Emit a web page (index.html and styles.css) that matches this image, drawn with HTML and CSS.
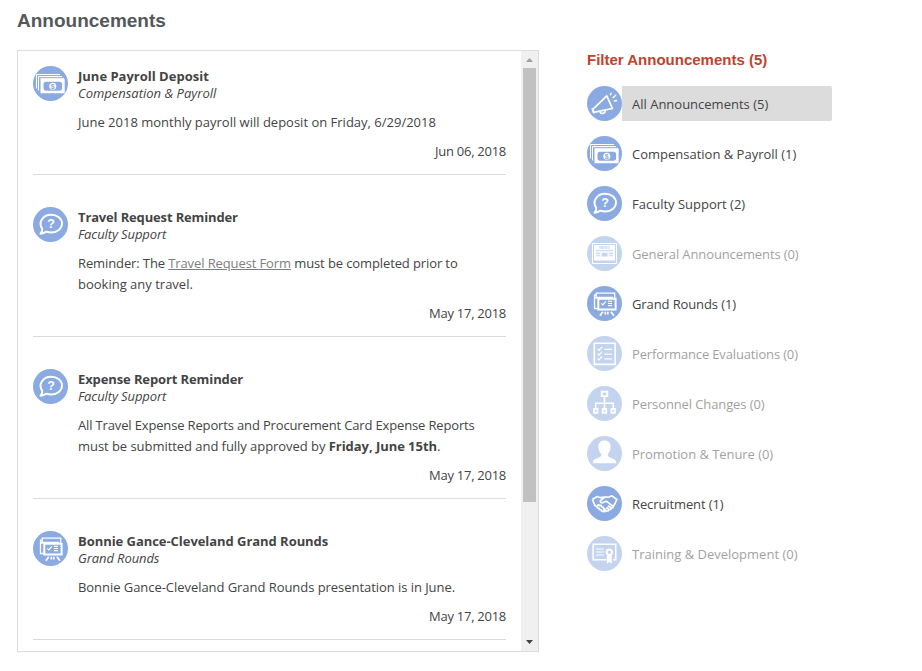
FILE: index.html
```html
<!DOCTYPE html>
<html lang="en">
<head>
<meta charset="utf-8">
<title>Announcements</title>
<link rel="stylesheet" href="styles.css">
</head>
<body>
<svg class="sprite" aria-hidden="true">
  <symbol id="money" viewBox="0 0 35 35">
    <path d="M3.500 22.500V8.500H27M5.500 24.500V10.500H29M31 12.300H7.300" fill="none" stroke="#fff" stroke-width="1"/>
    <path d="M7.500 13h24.200v14.200H7.500z" fill="#fff"/>
    <rect x="10.500" y="15.700" width="18.600" height="9" rx="2.600" fill="#8aaae1"/>
    <circle cx="19.800" cy="20.200" r="3.500" fill="#fff"/>
    <text x="19.800" y="22.700" class="glyph glyph-dollar">$</text>
  </symbol>
  <symbol id="question" viewBox="0 0 35 35">
    <path d="M9.200 21.600C4.900 15.600 9.600 7.700 18.100 7.700c6.100 0 10.900 3.900 10.900 8.900s-4.800 8.900-10.900 8.900c-1.700 0-3.200-.3-4.600-.9-1.700 1.300-3.700 2-6 2.100 1.400-1.500 2-3.200 1.700-5.100z" fill="none" stroke="#fff" stroke-width="1.900" stroke-linejoin="round"/>
    <text x="18" y="21.200" class="glyph glyph-question">?</text>
  </symbol>
  <symbol id="horn" viewBox="0 0 35 35">
    <path d="M5.800 23.300L19.800 9.800l5.600 12.700L6.500 26.300z" fill="none" stroke="#fff" stroke-width="1.700" stroke-linejoin="round"/>
    <path d="M4.900 22.200l2.200 5M12.800 25.500c.6 2.700 4.900 2.700 5.700-1M23.200 9.300l1.200-2.500M25.700 12l3.300-3M26.800 15.100l3.400-.7" fill="none" stroke="#fff" stroke-width="1.500"/>
  </symbol>
  <symbol id="news" viewBox="0 0 35 35">
    <path d="M5.500 7.500h24v20h-24z" fill="none" stroke="#fff" stroke-width="1"/>
    <path d="M7 9h21v15.500H7z" fill="#fff"/>
    <path d="M9 14.800h17M9 17.400h4.300M9 19.700h4.300M21.800 17.400H26M21.800 19.700H26" stroke="#8aaae1" stroke-width="1.100"/>
    <path d="M14.700 16.700h5.800v3.700h-5.800z" fill="#8aaae1"/>
    <text x="17.500" y="13.300" class="glyph glyph-news">NEWS</text>
  </symbol>
  <symbol id="board" viewBox="0 0 35 35">
    <path d="M10.300 22.500H7.500V9.200h1.700V7.200h18.500v4.500M9.200 9v2.300h17M7.500 12h3" fill="none" stroke="#fff" stroke-width="1.300"/>
    <path d="M11.300 12.700h17.300v10.700H11.300z" fill="none" stroke="#fff" stroke-width="2"/>
    <path d="M14.300 17.400l1.500 1.500 3-3.500M21 15.400h4M21 17.500h4M21 19.600h4" fill="none" stroke="#fff" stroke-width="1.100"/>
    <path d="M15.700 25.700L13 29.700M18.300 25.700v2.800M20.800 25.700v2.800M24 25.700l2.900 4" stroke="#fff" stroke-width="1.700"/>
  </symbol>
  <symbol id="checklist" viewBox="0 0 35 35">
    <path d="M7.300 7.200h20.800v21.200H7.300z" fill="none" stroke="#fff" stroke-width="1.600"/>
    <path d="M10.500 12.800l1.500 1.500 3-3.400M10.500 17.600l1.500 1.500 3-3.400M10.500 22.400l1.500 1.500 3-3.400M17.500 13.300h7.300M17.500 18.100h7.300M17.500 22.900h7.300" fill="none" stroke="#fff" stroke-width="1.200"/>
  </symbol>
  <symbol id="org" viewBox="0 0 35 35">
    <path d="M14.700 5.800h5.600v4.300h-5.600zM7 23h3.500v3.800H7zM15.700 23h3.500v3.800h-3.500zM24.400 23h3.500v3.800h-3.500z" fill="none" stroke="#fff" stroke-width="1.900"/>
    <path d="M17.500 10.500V22M8.700 22v-4.700h17.500V22" fill="none" stroke="#fff" stroke-width="1.600"/>
  </symbol>
  <symbol id="person" viewBox="0 0 35 35">
    <path d="M17.500 4.600c4 0 6.100 2.600 6.100 6.300 0 2.800-1.100 5.200-2.600 6.900-.7 2.100.1 3 1.800 3.600l4 1.500c1.800.8 2.400 2.100 2.400 4.300H5.800c0-2.200.6-3.500 2.400-4.300l4-1.500c1.700-.6 2.500-1.500 1.800-3.600-1.500-1.700-2.600-4.100-2.600-6.900 0-3.700 2.100-6.300 6.100-6.300z" fill="#fff"/>
  </symbol>
  <symbol id="hands" viewBox="0 0 35 35">
    <path d="M5.300 13.500l5-3 3 1.200 4.500-.5 4.600-.4 2.500-.9 5 3.600-2.700 5.700-2 1.200M5.300 13.500L8 19.700l1.700.8M17.700 11.300l-4.200 3.300c-.6 2 1 2.500 2.500 1.900l3.300-1.300 6.500 5c.8 1-.3 2.300-1.600 1.600l-3.300-2M24 22c.3 1.400-1 2-2.200 1.300l-2.500-1.800M21.800 23.600c0 1.300-1.200 1.800-2.400 1l-1.700-1M19 25c-.9.900-2 .6-3-.3M9.600 20.600l1.900-1.900 1.200 1 1.300-.3.700 1.500 1.400.1.500 1.500 1.200.6-2 2.500-1.300-.7-.6-1.300-1.500-.1-.5-1.400-1.500-.2z" fill="none" stroke="#fff" stroke-width="1.700" stroke-linejoin="round"/>
  </symbol>
  <symbol id="certificate" viewBox="0 0 35 35">
    <path d="M19 23.800H6.200V8.200h22.500v15.600h-2.500" fill="none" stroke="#fff" stroke-width="1.600"/>
    <path d="M9.200 13h7.500M9.200 16h7.500M9.200 19h7.500" stroke="#fff" stroke-width="1"/>
    <circle cx="22.300" cy="16.200" r="2.700" fill="none" stroke="#fff" stroke-width="1.900"/>
    <path d="M19.800 19.300h5v8.400l-2.500-1.700-2.500 1.700z" fill="#fff"/>
  </symbol>
</svg>

<h1 class="page-title">Announcements</h1>
<main class="columns">
  <section class="feed">
    <div class="feed-list">
      <article class="item">
        <svg class="icon"><use href="#money"/></svg>
        <div class="item-body">
          <h2 class="item-title">June Payroll Deposit</h2>
          <p class="item-category wide">Compensation &amp; Payroll</p>
          <p class="item-text">June 2018 monthly payroll will deposit on Friday, 6/29/2018</p>
          <p class="item-date">Jun 06, 2018</p>
        </div>
      </article>
      <article class="item">
        <svg class="icon"><use href="#question"/></svg>
        <div class="item-body">
          <h2 class="item-title tighter">Travel Request Reminder</h2>
          <p class="item-category">Faculty Support</p>
          <p class="item-text"><span class="tight">Reminder: The <a class="link" href="#">Travel Request Form</a> must be completed prior to</span><br>booking any travel.</p>
          <p class="item-date">May 17, 2018</p>
        </div>
      </article>
      <article class="item">
        <svg class="icon"><use href="#question"/></svg>
        <div class="item-body">
          <h2 class="item-title tight">Expense Report Reminder</h2>
          <p class="item-category">Faculty Support</p>
          <p class="item-text"><span class="tighter">All Travel Expense Reports and Procurement Card Expense Reports</span><br><span class="snug">must be submitted and fully approved by <b>Friday, June 15th</b>.</span></p>
          <p class="item-date">May 17, 2018</p>
        </div>
      </article>
      <article class="item">
        <svg class="icon"><use href="#board"/></svg>
        <div class="item-body">
          <h2 class="item-title snug">Bonnie Gance-Cleveland Grand Rounds</h2>
          <p class="item-category">Grand Rounds</p>
          <p class="item-text snug">Bonnie Gance-Cleveland Grand Rounds presentation is in June.</p>
          <p class="item-date">May 17, 2018</p>
        </div>
      </article>
    </div>
    <div class="scrollbar">
      <svg class="arrow" viewBox="0 0 17 17"><path d="M5 11h7L8.500 7z" fill="#a0a0a0"/></svg>
      <div class="thumb"></div>
      <svg class="arrow arrow-down" viewBox="0 0 17 17"><path d="M5 6h7l-3.500 4z" fill="#444"/></svg>
    </div>
  </section>

  <aside class="filters">
    <h2 class="filters-title">Filter Announcements (5)</h2>
    <ul class="filter-list">
      <li class="filter selected"><svg class="icon"><use href="#horn"/></svg><span class="label">All Announcements (5)</span></li>
      <li class="filter"><svg class="icon"><use href="#money"/></svg><span class="label">Compensation &amp; Payroll (1)</span></li>
      <li class="filter"><svg class="icon"><use href="#question"/></svg><span class="label">Faculty Support (2)</span></li>
      <li class="filter empty"><svg class="icon"><use href="#news"/></svg><span class="label tight">General Announcements (0)</span></li>
      <li class="filter"><svg class="icon"><use href="#board"/></svg><span class="label tight">Grand Rounds (1)</span></li>
      <li class="filter empty"><svg class="icon"><use href="#checklist"/></svg><span class="label tighter">Performance Evaluations (0)</span></li>
      <li class="filter empty"><svg class="icon"><use href="#org"/></svg><span class="label tight">Personnel Changes (0)</span></li>
      <li class="filter empty"><svg class="icon"><use href="#person"/></svg><span class="label snug">Promotion &amp; Tenure (0)</span></li>
      <li class="filter"><svg class="icon"><use href="#hands"/></svg><span class="label tight">Recruitment (1)</span></li>
      <li class="filter empty"><svg class="icon"><use href="#certificate"/></svg><span class="label">Training &amp; Development (0)</span></li>
    </ul>
  </aside>
</main>
</body>
</html>
```
FILE: styles.css
```css
* { box-sizing: border-box; }
body {
  margin: 0;
  padding: 9px 0 0 17px;
  background: #fff;
  color: #444;
  font: 13px/21px "Open Sans", "Noto Sans", sans-serif;
}
h1, h2, p, ul { margin: 0; padding: 0; }
.sprite { display: none; }
.page-title {
  height: 41px;
  font: bold 19px/23px "Liberation Sans", Arial, sans-serif;
  color: #54585a;
}
.columns { display: flex; gap: 48px; }
.feed {
  display: flex;
  width: 522px;
  height: 602px;
  border: 1px solid #dcdcdc;
  overflow: hidden;
}
.feed-list { flex: 1; padding: 15px; }
.item {
  display: flex;
  gap: 10px;
  margin-bottom: 32px;
  padding-bottom: 12px;
  border-bottom: 1px solid #dcdcdc;
}
.icon {
  flex: none;
  width: 35px;
  height: 35px;
  border-radius: 50%;
  background: #8aaae1;
}
.item-body { flex: 1; padding-top: 2px; white-space: nowrap; }
.item-title { font-size: 13px; line-height: 17px; font-weight: 700; }
.item-category { font-style: italic; line-height: 17px; letter-spacing: -.1px; }
.item-category.wide { letter-spacing: 0; }
.item-text { margin-top: 10px; }
.item-date { margin-top: 8px; text-align: right; letter-spacing: -.27px; }
.snug { letter-spacing: -.05px; }
.tight { letter-spacing: -.11px; }
.tighter { letter-spacing: -.15px; }
.link { color: #7e7e7e; }
.scrollbar {
  display: flex;
  flex-direction: column;
  width: 17px;
  background: #f0f0f0;
}
.arrow { display: block; width: 17px; height: 17px; flex: none; }
.arrow-down { margin-top: auto; }
.thumb { height: 434px; margin: 0 2px; background: #c1c1c1; }
.filters { width: 245px; }
.filters-title {
  height: 36px;
  font: bold 15px/20px "Liberation Sans", Arial, sans-serif;
  color: #c0432f;
}
.filter-list { display: flex; flex-direction: column; gap: 15px; list-style: none; }
.filter { display: flex; height: 35px; }
.label { flex: 1; padding-left: 10px; line-height: 36px; white-space: nowrap; }
.selected .label { background: #dcdcdc; border-radius: 0 2px 2px 0; }
.empty { opacity: .5; }
.glyph { fill: #fff; text-anchor: middle; font-family: "Liberation Sans", Arial, sans-serif; }
.glyph-dollar { fill: #8aaae1; font-size: 7px; font-weight: 700; }
.glyph-question { font-size: 12.500px; font-weight: 700; }
.glyph-news { fill: #8aaae1; font-size: 3.500px; font-weight: 700; }
```
